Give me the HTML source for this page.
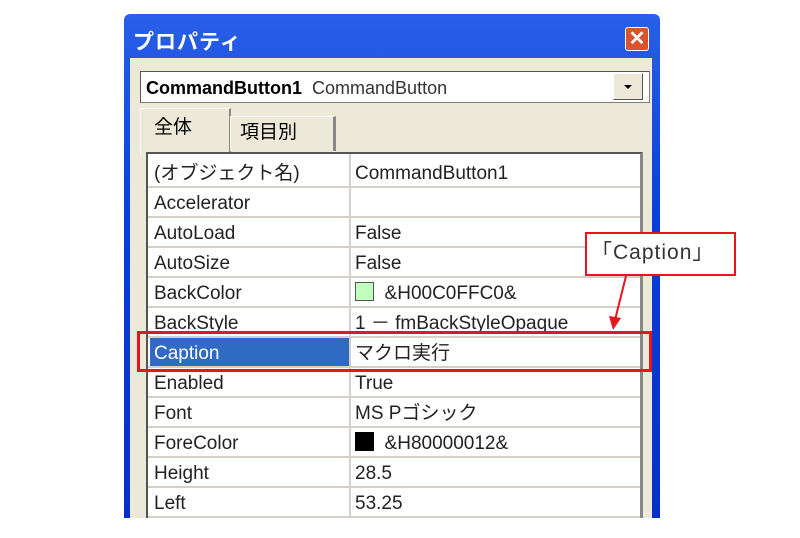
<!DOCTYPE html>
<html><head><meta charset="utf-8"><style>
body{margin:0;width:800px;height:538px;background:#fff;position:relative;overflow:hidden;font-family:"Liberation Sans","Noto Sans CJK JP",sans-serif;}
.a{position:absolute}
.win{left:124px;top:14px;width:536px;height:504px;background:linear-gradient(#2a5fe8,#0a3fd8 40%,#0530c8);border-radius:6px 6px 0 0}
.body{left:130px;top:58px;width:522px;height:460px;background:#ece9d8}
.title{left:133px;top:26px;color:#fff;font-size:21px;font-weight:bold;letter-spacing:1px}
.close{left:625px;top:27px;width:22px;height:22px;background:#d9532e;border:1px solid #fff;border-radius:3px;color:#fff;font-weight:bold;font-size:20px;line-height:22px;text-align:center}
.combo{left:140px;top:71px;width:503px;height:30px;background:#fff;border:1px solid #7f7f7f;border-top-color:#555;border-left-color:#555;font-size:18px;line-height:32px;padding-left:5px;box-sizing:content-box}
.dd{left:613px;top:73px;width:30px;height:27px;background:#ece9d8;border:1px solid #fff;border-right-color:#555;border-bottom-color:#555;box-sizing:border-box}
.tab{font-size:19px;line-height:30px}
.grid{left:146px;top:152px;width:497px;height:366px;border:2px solid #555;border-bottom:none;border-right:3px solid #888;background:#fff;box-sizing:border-box}
.row{position:absolute;left:0;width:492px;height:30px;border-bottom:2px solid #d4d0c8;box-sizing:border-box;font-size:19px;color:#222}
.row span{position:absolute;top:0;height:30px;line-height:32px;white-space:nowrap}
.k{left:6px}.v{left:207px}
.div{left:349px;top:154px;width:2px;height:364px;background:#d4d0c8}
</style></head><body>
<div class="a win"></div>
<div class="a body"></div>
<div class="a title">プロパティ</div>
<div class="a close">✕</div>
<div class="a combo"><b>CommandButton1</b>&nbsp; <span style="color:#333">CommandButton</span></div>
<div class="a dd"><div class="a" style="left:10px;top:11px;width:0;height:0;border-left:4px solid transparent;border-right:4px solid transparent;border-top:4px solid #000"></div></div>
<div class="a" style="left:140px;top:108px;width:88px;height:46px;border:1px solid #fff;border-right:2px solid #888;border-bottom:none;background:#ece9d8"></div>
<div class="a tab" style="left:154px;top:113px">全体</div>
<div class="a" style="left:230px;top:116px;width:102px;height:34px;border-left:1px solid #fff;border-right:3px solid #888;border-top:1px solid #fff"></div>
<div class="a tab" style="left:240px;top:118px">項目別</div>
<div class="a grid">
<div class="row" style="top:4px"><span class="k">(オブジェクト名)</span><span class="v">CommandButton1</span></div>
<div class="row" style="top:34px"><span class="k">Accelerator</span></div>
<div class="row" style="top:64px"><span class="k">AutoLoad</span><span class="v">False</span></div>
<div class="row" style="top:94px"><span class="k">AutoSize</span><span class="v">False</span></div>
<div class="row" style="top:124px"><span class="k">BackColor</span><span class="v"><i style="display:inline-block;width:17px;height:17px;background:#c0ffc0;border:1px solid #555;vertical-align:-2px"></i>&nbsp; &amp;H00C0FFC0&amp;</span></div>
<div class="row" style="top:154px"><span class="k">BackStyle</span><span class="v">1 － fmBackStyleOpaque</span></div>
<div class="row" style="top:184px"><div class="a" style="left:2px;top:0;width:201px;height:28px;background:#316ac5"></div><span class="k" style="color:#fff">Caption</span><span class="v">マクロ実行</span></div>
<div class="row" style="top:214px"><span class="k">Enabled</span><span class="v">True</span></div>
<div class="row" style="top:244px"><span class="k">Font</span><span class="v">MS Pゴシック</span></div>
<div class="row" style="top:274px"><span class="k">ForeColor</span><span class="v"><i style="display:inline-block;width:19px;height:19px;background:#000;vertical-align:-2px"></i>&nbsp; &amp;H80000012&amp;</span></div>
<div class="row" style="top:304px"><span class="k">Height</span><span class="v">28.5</span></div>
<div class="row" style="top:334px"><span class="k">Left</span><span class="v">53.25</span></div>
</div>
<div class="a div"></div>
<div class="a" style="left:137px;top:331px;width:515px;height:41px;border:3px solid #e8141e;box-sizing:border-box"></div>
<div class="a" style="left:585px;top:232px;width:151px;height:44px;border:2px solid #e8141e;background:#fff;box-sizing:border-box;font-size:21px;line-height:38px;padding-left:4px;color:#333;letter-spacing:1px">「Caption」</div>
<svg class="a" style="left:600px;top:274px" width="40" height="60"><line x1="26" y1="2" x2="15" y2="46" stroke="#e8141e" stroke-width="2"/><polygon points="9,42 21,44 13,56" fill="#e8141e"/></svg>
</body></html>
